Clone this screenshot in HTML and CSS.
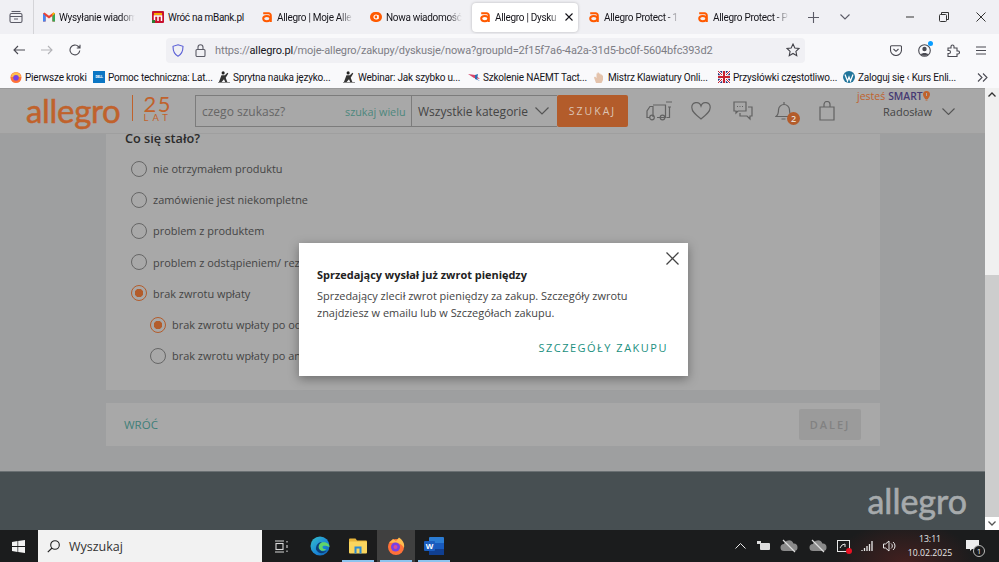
FILE: index.html
```html
<!DOCTYPE html>
<html>
    <head>
        <meta charset="utf-8">
        <title>Allegro | Dyskusje</title>
        <link rel="stylesheet" href="styles.css">
    </head>
    <body>
      <svg class="defs" width="0" height="0">
        <symbol id="allegroA" viewBox="0 0 12 12">
          <path d="M2.2 2.2H7.6A2.2 2.2 0 0 1 9.8 4.4V11" fill="none" stroke="#ff5a00" stroke-width="2"/>
          <ellipse cx="5.8" cy="7.6" rx="3.6" ry="2.6" fill="none" stroke="#ff5a00" stroke-width="2"/>
        </symbol>
        <symbol id="bookPerson" viewBox="0 0 14 14">
          <circle cx="6" cy="2.2" r="1.8" fill="#222"/>
          <path d="M1 13 4 5 8 5 11 2 12 3 9 8 11 13 8.5 13 7 9.5 4 13Z" fill="#333"/>
          <path d="M0 13.5H14" stroke="#777" stroke-width="1"/>
        </symbol>
        <symbol id="cloudOff" viewBox="0 0 18 14">
          <path d="M4 12a3.5 3.5 0 0 1 0-7 5 5 0 0 1 9.4-.6A3.8 3.8 0 0 1 14 12Z" fill="#8a8a8a"/>
          <path d="M3 1 15 13" stroke="#ddd" stroke-width="1.2"/>
        </symbol>
      </svg>

      <div class="tabBar">
        <div class="listAll">
          <svg width="14" height="14" viewBox="0 0 14 14" fill="none" stroke="#5b5b66" stroke-width="1.1"><path d="M2.5 1.5h9"/><rect x="1" y="3.5" width="12" height="9" rx="1.5"/><path d="M1 6.5h12M5 9h4"/></svg>
        </div>
        <div class="tab">
          <svg class="favicon" viewBox="0 0 12 12"><path d="M0 2.5V10.5H2.6V5L6 7.6 9.4 5V10.5H12V2.5L10.5 1.4 6 4.8 1.5 1.4Z" fill="#ea4335"/><path d="M0 2.5V10.5H2.6V5Z" fill="#4285f4"/><path d="M12 2.5V10.5H9.4V5Z" fill="#34a853"/><path d="M12 2.5 10.5 1.4 9.4 2.2V5Z" fill="#fbbc04"/></svg>
          <span class="tabTitle">Wysyłanie wiadom</span>
        </div>
        <div class="tab">
          <svg class="favicon" viewBox="0 0 12 12"><rect width="12" height="12" rx="1" fill="#c8102e"/><rect x="2" y="2" width="8" height="2" fill="#f5a800"/><path d="M2.5 10V5h7v5M6 5v5" fill="none" stroke="#fff" stroke-width="1.5"/><rect y="9" width="3" height="3" fill="#2e7d32"/></svg>
          <span class="tabTitle plain">Wróć na mBank.pl</span>
        </div>
        <div class="tab">
          <svg class="favicon"><use href="#allegroA"/></svg>
          <span class="tabTitle">Allegro | Moje Alle</span>
        </div>
        <div class="tab">
          <svg class="favicon" viewBox="0 0 12 12"><rect y="1" width="12" height="10" rx="5" fill="#ff5a00"/><circle cx="6" cy="6" r="2" fill="none" stroke="#fff" stroke-width="1.2"/><path d="M8 4v4" stroke="#fff" stroke-width="1.2"/></svg>
          <span class="tabTitle">Nowa wiadomość</span>
        </div>
        <div class="tab active">
          <svg class="favicon"><use href="#allegroA"/></svg>
          <span class="tabTitle">Allegro | Dysku</span>
          <svg class="tabClose" width="8" height="8" viewBox="0 0 8 8" stroke="#15141a" stroke-width="1.1"><path d="M.5.5l7 7M7.5.5l-7 7"/></svg>
        </div>
        <div class="tab">
          <svg class="favicon"><use href="#allegroA"/></svg>
          <span class="tabTitle">Allegro Protect - 1</span>
        </div>
        <div class="tab">
          <svg class="favicon"><use href="#allegroA"/></svg>
          <span class="tabTitle">Allegro Protect - P</span>
        </div>
        <svg class="newTab" width="11" height="11" viewBox="0 0 11 11" stroke="#5b5b66" stroke-width="1.1"><path d="M5.5 0v11M0 5.5h11"/></svg>
        <svg class="tabMenu" width="10" height="6" viewBox="0 0 10 6" fill="none" stroke="#5b5b66" stroke-width="1.1"><path d="M.5.5 5 5 9.5.5"/></svg>
        <div class="winButtons">
          <svg width="10" height="10" viewBox="0 0 10 10" stroke="#333" stroke-width="1"><path d="M1 5h8"/></svg>
          <svg width="10" height="10" viewBox="0 0 10 10" fill="none" stroke="#333" stroke-width="1"><rect x=".5" y="2.5" width="7" height="7" rx="1"/><path d="M2.5 2.5V.5h7v7H7.5"/></svg>
          <svg width="10" height="10" viewBox="0 0 10 10" stroke="#333" stroke-width="1"><path d="M.5.5l9 9M9.5.5l-9 9"/></svg>
        </div>
      </div>

      <div class="toolBar">
        <div class="navButtons">
          <svg width="12" height="10" viewBox="0 0 12 10" fill="none" stroke="#4a4a52" stroke-width="1.1"><path d="M12 5H1M5 1 1 5l4 4"/></svg>
          <svg width="12" height="10" viewBox="0 0 12 10" fill="none" stroke="#b4b4b8" stroke-width="1.1"><path d="M0 5h11M7 1l4 4-4 4"/></svg>
          <svg width="12" height="12" viewBox="0 0 12 12" fill="none" stroke="#4a4a52" stroke-width="1.1"><path d="M10.8 6.5A4.9 4.9 0 1 1 9.4 2.5L11 4M11 .8V4H7.8"/></svg>
        </div>
        <div class="urlBar">
          <svg width="12" height="13" viewBox="0 0 12 13" fill="none" stroke="#5a5fd6" stroke-width="1.1"><path d="M6 .8 11 2.3C11 7 10 10.3 6 12.2 2 10.3 1 7 1 2.3Z"/></svg>
          <svg class="urlLock" width="11" height="13" viewBox="0 0 11 13" fill="none" stroke="#5b5b66" stroke-width="1.1"><rect x="1" y="5.5" width="9" height="7" rx="1"/><path d="M3 5.5V3.3a2.5 2.5 0 0 1 5 0v2.2"/></svg>
          <span class="urlText">https://<b>allegro.pl</b>/moje-allegro/zakupy/dyskusje/nowa?groupId=2f15f7a6-4a2a-31d5-bc0f-5604bfc393d2</span>
          <svg class="urlStar" width="14" height="14" viewBox="0 0 13 13" fill="none" stroke="#3f3f46" stroke-width="1"><path d="M6.5 1 8.2 4.6l3.9.5-2.9 2.7.8 3.9-3.5-2-3.5 2 .8-3.9L.9 5.1l3.9-.5Z"/></svg>
        </div>
        <div class="toolIcons">
          <svg width="12" height="11" viewBox="0 0 12 11" fill="none" stroke="#4a4a52" stroke-width="1.1"><path d="M1.5.8h9a1 1 0 0 1 1 1V5a5.5 5.5 0 0 1-11 0V1.8a1 1 0 0 1 1-1ZM3.5 4 6 6.3 8.500 4"/></svg>
          <div class="account">
            <svg width="13" height="13" viewBox="0 0 13 13"><circle cx="6.500" cy="6.500" r="5.800" fill="none" stroke="#4a4a52" stroke-width="1.1"/><circle cx="6.500" cy="5" r="2.200" fill="#4a4a52"/><path d="M2.800 10.500C3.500 8.500 9.500 8.500 10.200 10.500 8.500 12.300 4.500 12.300 2.800 10.500Z" fill="#4a4a52"/></svg>
            <span class="accountDot"></span>
          </div>
          <svg width="13" height="13" viewBox="0 0 13 13" fill="none" stroke="#4a4a52" stroke-width="1.1"><path d="M1 4h3V2.500a1.500 1.500 0 0 1 3 0V4h3v3h1a1.500 1.500 0 0 1 0 3h-1v2.500H1V9.500h1a1.500 1.500 0 0 0 0-3H1Z"/></svg>
          <svg width="10" height="9" viewBox="0 0 10 9" stroke="#4a4a52" stroke-width="1.1"><path d="M0 1h10M0 4.500h10M0 8h10"/></svg>
        </div>
      </div>

      <div class="bookmarks">
        <div class="bookmark first">
          <svg class="bookIcon" viewBox="0 0 12 12"><circle cx="6" cy="6.500" r="5.500" fill="#ff7139"/><path d="M2 3 6 1l4 2 1 3H1Z" fill="#ffbd4f"/><circle cx="6" cy="6.800" r="2.800" fill="#7542e5"/></svg>
          <span>Pierwsze kroki</span>
        </div>
        <div class="bookmark">
          <span class="dellIcon">DELL</span>
          <span>Pomoc techniczna: Lat...</span>
        </div>
        <div class="bookmark">
          <svg class="bookIcon"><use href="#bookPerson"/></svg>
          <span>Sprytna nauka języko...</span>
        </div>
        <div class="bookmark">
          <svg class="bookIcon"><use href="#bookPerson"/></svg>
          <span>Webinar: Jak szybko u...</span>
        </div>
        <div class="bookmark">
          <svg class="bookIcon" viewBox="0 0 12 12"><path d="M0 3 7 4 12 8 6 7Z" fill="#d8456b"/><path d="M7 4 10 3 9 8 12 10 7 8Z" fill="#2d6fb3"/></svg>
          <span>Szkolenie NAEMT Tact...</span>
        </div>
        <div class="bookmark">
          <svg class="bookIcon" viewBox="0 0 12 12" fill="#e4c3ac"><path d="M3 12 1 6.500 2 5.500 3.500 7V2.500h1V1.500h1.300l.2 1h1.300l.2 1H8.800l.2 1h1V9L8.500 12Z"/></svg>
          <span>Mistrz Klawiatury Onli...</span>
        </div>
        <div class="bookmark">
          <svg class="bookIcon" viewBox="0 0 12 12"><rect width="12" height="12" fill="#27307a"/><path d="M0 0 12 12M12 0 0 12" stroke="#fff" stroke-width="2.400"/><path d="M0 0 12 12M12 0 0 12" stroke="#c8202f" stroke-width="1"/><path d="M6 0V12M0 6H12" stroke="#fff" stroke-width="3.600"/><path d="M6 0V12M0 6H12" stroke="#c8202f" stroke-width="2"/></svg>
          <span>Przysłówki częstotliwo...</span>
        </div>
        <div class="bookmark">
          <svg class="bookIcon" viewBox="0 0 12 12"><circle cx="6" cy="6" r="6" fill="#21759b"/><path d="M2 3.500 4.500 10 6 6 7.500 10 10 3.500" fill="none" stroke="#fff" stroke-width="1.200"/></svg>
          <span>Zaloguj się ‹ Kurs Enli...</span>
        </div>
        <svg class="bookMore" width="11" height="9" viewBox="0 0 11 9" fill="none" stroke="#4a4a52" stroke-width="1.100"><path d="M1 .5 5 4.500 1 8.500M6 .5l4 4-4 4"/></svg>
      </div>

      <div class="viewport">
        <div class="page">
          <header class="siteHeader">
            <div class="logoBox">
              <span class="logo">allegro</span>
              <span class="logoSep"></span>
              <div class="jubilee"><span class="jubNum">25</span><span class="jubLat">LAT</span></div>
            </div>
            <div class="search">
              <span class="searchInput">czego szukasz?</span>
              <span class="searchMany">szukaj wielu</span>
              <div class="searchCat">
                <span>Wszystkie kategorie</span>
                <svg width="14" height="8" viewBox="0 0 14 8" fill="none" stroke="#555" stroke-width="1.200"><path d="M.5.5 7 7 13.500.5"/></svg>
              </div>
              <button class="searchBtn">SZUKAJ</button>
            </div>
            <div class="headIcons">
              <svg class="truck" width="26" height="20" viewBox="0 0 26 20" fill="none" stroke="#626262" stroke-width="1.200"><path d="M7 4h12.500v12.500H11M4 16.500H1V10l3-4.500h3V16M20 1h6M22 6h3M23.500 6v10.500h-3M16.500 16.500H14"/><circle cx="6" cy="16.500" r="2.300"/><circle cx="16.500" cy="16.500" r="2.300"/></svg>
              <svg width="20" height="18" viewBox="0 0 20 18" fill="none" stroke="#626262" stroke-width="1.200"><path d="M10 17C5 13 .8 9.800.8 5.500A4.700 4.700 0 0 1 10 4a4.700 4.700 0 0 1 9.200 1.500C19.200 9.800 15 13 10 17Z"/></svg>
              <svg width="20" height="20" viewBox="0 0 20 20" fill="none" stroke="#626262" stroke-width="1.200"><path d="M1 1h12v9H5l-2 2v-2H1ZM15 6h4v9h-2v3l-3-3H7v-3"/><path d="M4 5.500h1M6.500 5.500h1M9 5.500h1"/></svg>
              <div class="bell">
                <svg width="18" height="20" viewBox="0 0 18 20" fill="none" stroke="#626262" stroke-width="1.200"><path d="M1 15.500c2-1.500 2.500-3 2.500-6.500a5.500 5.500 0 0 1 11 0c0 3.500.5 5 2.500 6.500ZM9 1v2.500M6.500 18h4"/></svg>
                <span class="bellBadge">2</span>
              </div>
              <svg width="16" height="20" viewBox="0 0 16 20" fill="none" stroke="#626262" stroke-width="1.200"><path d="M1 6h14v13H1ZM5 6V3.500a3 3 0 0 1 6 0V6"/></svg>
            </div>
            <div class="userBox">
              <div class="smart"><span>jesteś</span><b>SMART</b><svg width="7" height="10" viewBox="0 0 7 10"><path d="M3.500 0A3.500 3.500 0 0 1 7 3.500C7 6 5 7 5 8H2C2 7 0 6 0 3.500A3.500 3.500 0 0 1 3.500 0Z" fill="#c0622c"/><path d="M2.500 9h2" stroke="#c0622c"/><path d="M3.500 2v3" stroke="#a8a8a8"/></svg></div>
              <div class="userName">Radosław
                <svg width="13" height="7" viewBox="0 0 13 7" fill="none" stroke="#555" stroke-width="1.100"><path d="M.5.500 6.500 6.500 12.500.500"/></svg>
              </div>
            </div>
          </header>

          <main class="content">
            <section class="card formCard">
              <h2 class="question">Co się stało?</h2>
              <label class="option"><span class="radio"></span>nie otrzymałem produktu</label>
              <label class="option"><span class="radio"></span>zamówienie jest niekompletne</label>
              <label class="option"><span class="radio"></span>problem z produktem</label>
              <label class="option"><span class="radio"></span>problem z odstąpieniem/ rezygnacją</label>
              <label class="option"><span class="radio on"></span>brak zwrotu wpłaty</label>
              <label class="option sub"><span class="radio on"></span>brak zwrotu wpłaty po odstąpieniu</label>
              <label class="option sub"><span class="radio"></span>brak zwrotu wpłaty po anulowaniu</label>
            </section>
            <section class="card navCard">
              <a class="backLink">WRÓĆ</a>
              <button class="nextBtn">DALEJ</button>
            </section>
          </main>

          <footer class="siteFooter">
            <span class="footLogo">allegro</span>
          </footer>

          <div class="overlay">
            <div class="modal">
              <svg class="modalClose" width="13" height="13" viewBox="0 0 13 13" stroke="#444" stroke-width="1.300"><path d="M.5.500l12 12M12.500.500l-12 12"/></svg>
              <h3 class="modalTitle">Sprzedający wysłał już zwrot pieniędzy</h3>
              <p class="modalText">Sprzedający zlecił zwrot pieniędzy za zakup. Szczegóły zwrotu znajdziesz w emailu lub w Szczegółach zakupu.</p>
              <a class="modalLink">SZCZEGÓŁY ZAKUPU</a>
            </div>
          </div>
        </div>
        <div class="scrollBar">
          <div class="scrollUp"><svg width="8" height="5" viewBox="0 0 8 5" fill="none" stroke="#333" stroke-width="1.300"><path d="M.5 4.500 4 1l3.500 3.500"/></svg></div>
          <div class="scrollTrack"></div>
          <div class="scrollThumb"></div>
          <div class="scrollDown"><svg width="8" height="5" viewBox="0 0 8 5" fill="none" stroke="#555" stroke-width="1.300"><path d="M.5.500 4 4 7.500.500"/></svg></div>
        </div>
      </div>

      <div class="taskBar">
        <div class="startBtn">
          <svg width="13" height="13" viewBox="0 0 13 13" fill="#f2f2f2"><path d="M0 1.900 5.500 1.100V6.100H0ZM6.200 1 13 0V6.100H6.200ZM0 6.900H5.500V11.900L0 11.100ZM6.200 6.900H13V13L6.200 12Z"/></svg>
        </div>
        <div class="winSearch">
          <svg width="13" height="13" viewBox="0 0 13 13" fill="none" stroke="#222" stroke-width="1.100"><circle cx="8" cy="5" r="4.300"/><path d="M5 8 .8 12.200"/></svg>
          <span>Wyszukaj</span>
        </div>
        <div class="taskIcons">
          <div class="taskItem">
            <svg width="14" height="13" viewBox="0 0 14 13" fill="none" stroke="#d8d8d8" stroke-width="1.100"><path d="M0 1h9M0 12h9"/><rect x="1" y="3.500" width="7" height="6"/><path d="M12 1v1.500M12 5v3M12 10.500V12"/></svg>
          </div>
          <div class="taskItem">
            <svg width="20" height="20" viewBox="0 0 20 20"><defs><linearGradient id="edgeA" x1="0" y1="0" x2="1" y2="1"><stop offset="0" stop-color="#35c1c9"/><stop offset=".6" stop-color="#1a86d8"/><stop offset="1" stop-color="#0f5dac"/></linearGradient></defs><circle cx="10" cy="10" r="9.500" fill="url(#edgeA)"/><path d="M19.500 11C19.500 7 15 5.500 11.500 6.500 8.500 7.500 7.500 11 9.500 13.500 11.500 15.500 15 15 16.500 13 15 13.500 12.500 13 12.500 11 12.500 9.500 15 9 19.500 11Z" fill="#5fd46b"/><path d="M6 13.500C5.500 9.500 8.500 6 12 6 9 7.500 7.500 11 9.500 13.500 11 15.500 14 16 16.500 14.500 14 18.500 8 18 6 13.500Z" fill="#0c3f7a"/></svg>
          </div>
          <div class="taskItem running">
            <svg width="18" height="16" viewBox="0 0 18 16"><path d="M0 1.500A1 1 0 0 1 1 .5H6.500L8 2.500H17A1 1 0 0 1 18 3.500V5H0Z" fill="#e8b53a"/><rect y="3.500" width="18" height="12" rx="1" fill="#f9d55e"/><path d="M5.500 15.500V8.500H12.500V15.500H10.500V10.500H7.500V15.500Z" fill="#2a8ad4"/></svg>
          </div>
          <div class="taskItem running current">
            <svg width="18" height="18" viewBox="0 0 18 18"><circle cx="9" cy="10" r="8" fill="#ff7139"/><path d="M2 6 6 2 9 4 12 .5C15.500 3 18 6.500 17 11 15 6.500 10 5 2 6Z" fill="#ffbd4f"/><circle cx="8.500" cy="10" r="4.500" fill="#7542e5"/><circle cx="8.500" cy="10" r="2" fill="#d64c96"/></svg>
          </div>
          <div class="taskItem running">
            <svg class="wordIcon" width="20" height="18" viewBox="0 0 20 18"><rect x="5" width="15" height="18" rx="1" fill="#2b7cd3"/><rect x="5" y="12" width="15" height="6" fill="#103f91"/><rect x="5" y="6" width="15" height="6" fill="#185abd"/><rect y="4" width="11" height="10" rx="1" fill="#1a5dbf"/><text x="5.500" y="12" text-anchor="middle" class="wordLetter">W</text></svg>
          </div>
        </div>
        <div class="tray">
          <svg width="11" height="6" viewBox="0 0 11 6" fill="none" stroke="#e8e8e8" stroke-width="1"><path d="M.5 5.500 5.500.5l5 5"/></svg>
          <svg width="13" height="10" viewBox="0 0 13 10"><rect x="3" y="2" width="10" height="7" rx="1" fill="#ddd"/><rect y="0" width="4" height="3" fill="#ddd"/></svg>
          <svg width="18" height="14"><use href="#cloudOff"/></svg>
          <svg width="18" height="14"><use href="#cloudOff"/></svg>
          <div class="capture">
            <svg width="13" height="12" viewBox="0 0 13 12" fill="none" stroke="#e8e8e8" stroke-width="1"><rect x=".5" y=".5" width="12" height="11"/><path d="M3 8l2-3 3-1v3"/></svg>
            <span class="captureDot"></span>
          </div>
          <svg width="12" height="10" viewBox="0 0 12 10" stroke="#e8e8e8" stroke-width="1.300"><path d="M1 10V9M3.500 10V7M6 10V5M8.500 10V3M11 10V0" /></svg>
          <svg width="13" height="12" viewBox="0 0 13 12" fill="none" stroke="#e8e8e8" stroke-width="1"><path d="M.5 4h2L6 1v10L2.500 8h-2ZM8 3.500a3 3 0 0 1 0 5M10 2a5 5 0 0 1 0 8"/></svg>
        </div>
        <div class="clock">
          <span>13:11</span>
          <span>10.02.2025</span>
        </div>
        <div class="notify">
          <svg width="13" height="12" viewBox="0 0 13 12" fill="#eee"><path d="M0 0H13V9H6L4 11V9H0Z"/></svg>
          <span class="notifyCount">1</span>
        </div>
      </div>
    </body>
</html>
```

FILE: styles.css
```css
*{
  box-sizing: border-box;
}
html, body{
  margin: 0;
  height: 100%;
  overflow: hidden;
}
body{
  display: flex;
  flex-direction: column;
  font-family: "Open Sans", sans-serif;
  color: #333;
}
.defs{
  position: absolute;
}

/* browser chrome */
.tabBar{
  display: flex;
  align-items: center;
  height: 34px;
  flex: none;
  background-color: #f0f0f4;
  font-family: Roboto, sans-serif;
  font-size: 10px;
  letter-spacing: -.3px;
  color: #15141a;
}
.listAll{
  width: 34px;
  height: 34px;
  display: flex;
  align-items: center;
  padding-left: 9px;
  border-right: 1px solid #d4d4d8;
}
.tab{
  display: flex;
  align-items: center;
  width: 109px;
  height: 34px;
  padding-left: 9px;
  gap: 4px;
}
.tab.active{
  height: 29px;
  width: 106px;
  margin: 0 1px 0 2px;
  padding-left: 7px;
  background-color: #fff;
  border-radius: 4px;
  box-shadow: 0 0 3px rgba(0,0,0,.25);
}
.favicon{
  width: 12px;
  height: 12px;
  flex: none;
}
.tabTitle{
  width: 76px;
  white-space: nowrap;
  flex: none;
  -webkit-mask-image: linear-gradient(to right, #000 82%, transparent);
  mask-image: linear-gradient(to right, #000 82%, transparent);
}
.tabTitle.plain{
  -webkit-mask-image: none;
  mask-image: none;
}
.active .tabTitle{
  width: 66px;
}
.tabClose{
  flex: none;
  margin-left: 0;
}
.newTab{
  margin-left: 11px;
}
.tabMenu{
  margin-left: 21px;
}
.winButtons{
  margin-left: auto;
  display: flex;
  gap: 24px;
  padding-right: 13px;
}
.winButtons svg:last-child{
  margin-left: 3px;
}
.toolBar{
  display: flex;
  align-items: center;
  height: 32px;
  flex: none;
  background-color: #f9f9fb;
}
.navButtons{
  width: 166px;
  display: flex;
  align-items: center;
  gap: 16px;
  padding-left: 13px;
}
.urlBar{
  width: 639px;
  height: 25px;
  display: flex;
  align-items: center;
  gap: 9px;
  padding: 0 5px 0 6px;
  background-color: #f0f0f4;
  border-radius: 4px;
  font-family: Roboto, sans-serif;
  font-size: 11px;
  letter-spacing: -.14px;
  color: #7d7d85;
}
.urlLock{
  margin-left: 2px;
}
.urlText{
  white-space: nowrap;
}
.urlText b{
  font-weight: 400;
  color: #15141a;
}
.urlStar{
  margin-left: auto;
}
.toolIcons{
  display: flex;
  align-items: center;
  flex: 1;
  gap: 16px;
  padding-left: 85px;
}
.account{
  position: relative;
  display: flex;
}
.accountDot{
  position: absolute;
  top: -3px;
  right: -2px;
  width: 5px;
  height: 5px;
  border-radius: 50%;
  background-color: #0a9dff;
}
.bookmarks{
  display: flex;
  align-items: center;
  height: 22px;
  flex: none;
  padding-left: 10px;
  background-color: #f9f9fb;
  font-family: Roboto, sans-serif;
  font-size: 10px;
  letter-spacing: -.2px;
  color: #15141a;
}
.bookmark{
  width: 125px;
  flex: none;
  display: flex;
  align-items: center;
  gap: 3px;
  white-space: nowrap;
}
.bookmark.first{
  width: 83px;
}
.bookIcon{
  width: 12px;
  height: 12px;
  flex: none;
}
.dellIcon{
  width: 12px;
  height: 12px;
  flex: none;
  background-color: #0b76c4;
  color: #fff;
  font-size: 3.5px;
  font-weight: 700;
  line-height: 12px;
  text-align: center;
}
.bookMore{
  margin-left: auto;
  margin-right: 11px;
}

/* dimmed page */
.viewport{
  display: flex;
  flex: 1;
  min-height: 0;
}
.page{
  position: relative;
  flex: 1;
  min-width: 0;
  display: flex;
  flex-direction: column;
  overflow: hidden;
  background-color: #9e9fa0;
}
.siteHeader{
  position: relative;
  z-index: 1;
  flex: none;
  display: flex;
  height: 46px;
  padding-top: 6px;
  background-color: #a8a8a8;
  border-top: 1px solid #9a9a9a;
  border-bottom: 1px solid #9f9f9f;
}
.logoBox{
  width: 195px;
  display: flex;
  align-items: flex-start;
  padding-left: 26px;
}
.logo{
  font-family: "Lato", sans-serif;
  font-size: 33px;
  font-weight: 400;
  -webkit-text-stroke: .5px #c0622c;
  line-height: 30px;
  color: #c0622c;
  letter-spacing: -.3px;
}
.logoSep{
  width: 1px;
  height: 26px;
  margin: 0 11px 0 11px;
  background-color: #c0622c;
}
.jubilee{
  display: flex;
  flex-direction: column;
  width: 30px;
  color: #c0622c;
  font-family: "Lato", sans-serif;
}
.jubNum{
  font-size: 22px;
  line-height: 18px;
  letter-spacing: 1.500px;
  font-weight: 400;
}
.jubLat{
  font-size: 9.500px;
  line-height: 9px;
  letter-spacing: 4px;
}
.search{
  width: 433px;
  height: 32px;
  display: flex;
  align-items: center;
  font-size: 12px;
}
.searchInput{
  width: 150px;
  height: 100%;
  padding-left: 6px;
  display: flex;
  align-items: center;
  color: #666;
  border: 1px solid #7c7c7c;
  border-right: 0;
}
.searchMany{
  width: 67px;
  height: 100%;
  display: flex;
  align-items: center;
  font-size: 10.800px;
  color: #4c877d;
  border: 1px solid #7c7c7c;
  border-left: 0;
  white-space: nowrap;
}
.searchCat{
  width: 145px;
  height: 100%;
  padding: 0 8px 0 6px;
  display: flex;
  align-items: center;
  justify-content: space-between;
  color: #444;
  border-bottom: 1px solid #7c7c7c;
  border-top: 1px solid #7c7c7c;
  white-space: nowrap;
}
.searchBtn{
  width: 71px;
  height: 32px;
  border: 0;
  border-radius: 2px;
  background-color: #b35c2b;
  color: #dcc4b4;
  font-family: "Open Sans", sans-serif;
  font-size: 10.500px;
  letter-spacing: 2px;
  padding: 0;
}
.headIcons{
  width: 212px;
  height: 32px;
  display: flex;
  align-items: center;
  padding-left: 18px;
  gap: 22px;
}
.truck{
  margin-right: -3px;
}
.bell{
  position: relative;
  display: flex;
  margin-right: 4px;
}
.bellBadge{
  position: absolute;
  right: -7px;
  bottom: -4px;
  width: 13px;
  height: 13px;
  border-radius: 50%;
  background-color: #b35c2b;
  color: #e8dcd2;
  font-size: 9px;
  font-weight: 600;
  line-height: 13px;
  text-align: center;
}
.userBox{
  flex: 1;
  margin-top: -6px;
  margin-left: 17px;
  font-size: 11px;
}
.smart{
  display: flex;
  align-items: center;
  gap: 3px;
  height: 14px;
  font-size: 10.500px;
  color: #c0622c;
  white-space: nowrap;
}
.smart b{
  color: #463a73;
  font-weight: 600;
  font-size: 10.300px;
  margin-right: -3px;
}
.userName{
  display: flex;
  align-items: center;
  gap: 10px;
  margin: 1px 0 0 26px;
  color: #444;
}
.content{
  flex: 1;
  display: flex;
  flex-direction: column;
  padding: 0 105px 0 106px;
  gap: 13px;
}
.card{
  background-color: #a8a8a8;
}
.formCard{
  height: 256px;
  padding-left: 19px;
}
.question{
  margin: -4px 0 7px;
  font-size: 12.700px;
  font-weight: 600;
  line-height: 16px;
  color: #2b2b2b;
}
.option{
  display: flex;
  align-items: center;
  gap: 6px;
  height: 31.200px;
  margin-left: 6px;
  font-size: 10.950px;
  color: #444;
  white-space: nowrap;
}
.option.sub{
  margin-left: 25px;
}
.radio{
  width: 16px;
  height: 16px;
  flex: none;
  border: 1px solid #666;
  border-radius: 50%;
}
.radio.on{
  border: 1.500px solid #b35c2b;
  background: radial-gradient(circle, #b35c2b 0 4px, transparent 4.500px);
}
.navCard{
  height: 43px;
  display: flex;
  align-items: center;
  justify-content: space-between;
  padding: 0 19px 0 18px;
}
.backLink{
  font-size: 11.500px;
  color: #3f7f78;
}
.nextBtn{
  width: 62px;
  height: 31px;
  padding: 0;
  border: 0;
  border-radius: 2px;
  background-color: #9b9b9b;
  color: #828282;
  font-family: "Open Sans", sans-serif;
  font-size: 11px;
  font-weight: 600;
  letter-spacing: 2px;
}
.siteFooter{
  flex: none;
  height: 59px;
  display: flex;
  justify-content: flex-end;
  padding: 13px 18px 0 0;
  background-color: #474f52;
  border-top: 1px solid #6a7073;
}
.footLogo{
  font-family: "Lato", sans-serif;
  font-size: 34px;
  font-weight: 400;
  -webkit-text-stroke: .6px #a6aaac;
  line-height: 32px;
  color: #a6aaac;
}
.overlay{
  position: absolute;
  inset: 0;
  z-index: 2;
  display: flex;
  align-items: center;
  justify-content: center;
  padding-left: 2px;
}
.modal{
  position: relative;
  width: 389px;
  height: 133px;
  padding: 24px 18px 0;
  background-color: #fff;
  box-shadow: 0 3px 10px rgba(0,0,0,.35);
  display: flex;
  flex-direction: column;
}
.modalClose{
  position: absolute;
  top: 9px;
  right: 9px;
}
.modalTitle{
  margin: 0 0 4px;
  font-size: 10.950px;
  font-weight: 700;
  line-height: 16px;
  color: #222;
}
.modalText{
  margin: 0;
  font-size: 10.950px;
  line-height: 17px;
  color: #444;
}
.modalLink{
  margin: 19px 2px 0 auto;
  font-size: 11px;
  letter-spacing: 1.500px;
  color: #1a8f80;
}

/* scrollbar */
.scrollBar{
  width: 14px;
  flex: none;
  display: flex;
  flex-direction: column;
  background-color: #f0f0f0;
}
.scrollUp, .scrollDown{
  height: 13px;
  flex: none;
  display: flex;
  align-items: center;
  justify-content: center;
}
.scrollDown{
  background-color: #fff;
}
.scrollTrack{
  height: 174px;
  flex: none;
}
.scrollThumb{
  flex: 1;
  background-color: #cdcdcd;
}

/* windows taskbar */
.taskBar{
  height: 32px;
  flex: none;
  display: flex;
  align-items: center;
  background:
    radial-gradient(ellipse 70px 40px at 905px 100%, #43201f, transparent),
    #1b1c1d;
  color: #e8e8e8;
}
.startBtn{
  width: 38px;
  display: flex;
  justify-content: center;
  padding-right: 1px;
}
.winSearch{
  width: 224px;
  height: 32px;
  display: flex;
  align-items: center;
  gap: 9px;
  padding-left: 9px;
  background-color: #f2f2f2;
  color: #333;
  font-size: 12.500px;
}
.taskIcons{
  display: flex;
  height: 100%;
  padding-left: 1px;
}
.taskItem{
  position: relative;
  width: 38px;
  height: 100%;
  display: flex;
  align-items: center;
  justify-content: center;
}
.taskItem.running::after{
  content: "";
  position: absolute;
  left: 3px;
  right: 3px;
  bottom: 0;
  height: 2px;
  background-color: #8dc4ef;
}
.taskItem.current{
  background-color: #404040;
}
.wordLetter{
  fill: #fff;
  font-family: "Liberation Sans", sans-serif;
  font-size: 8px;
  font-weight: 700;
}
.tray{
  display: flex;
  align-items: center;
  gap: 10.500px;
  margin-left: auto;
  margin-right: 8px;
}
.capture{
  position: relative;
  display: flex;
}
.captureDot{
  position: absolute;
  right: -2px;
  bottom: -2px;
  width: 6px;
  height: 6px;
  border-radius: 50%;
  background-color: #e81123;
}
.clock{
  width: 52px;
  display: flex;
  flex-direction: column;
  align-items: center;
  font-size: 8.700px;
  line-height: 14px;
  white-space: nowrap;
}
.notify{
  position: relative;
  width: 25px;
  margin: 0 8px 0 10px;
  display: flex;
}
.notifyCount{
  position: absolute;
  left: 7px;
  top: 5px;
  width: 12px;
  height: 12px;
  border: 1px solid #bbb;
  border-radius: 50%;
  background-color: #1b1c1d;
  font-size: 8px;
  line-height: 10px;
  text-align: center;
}
```
